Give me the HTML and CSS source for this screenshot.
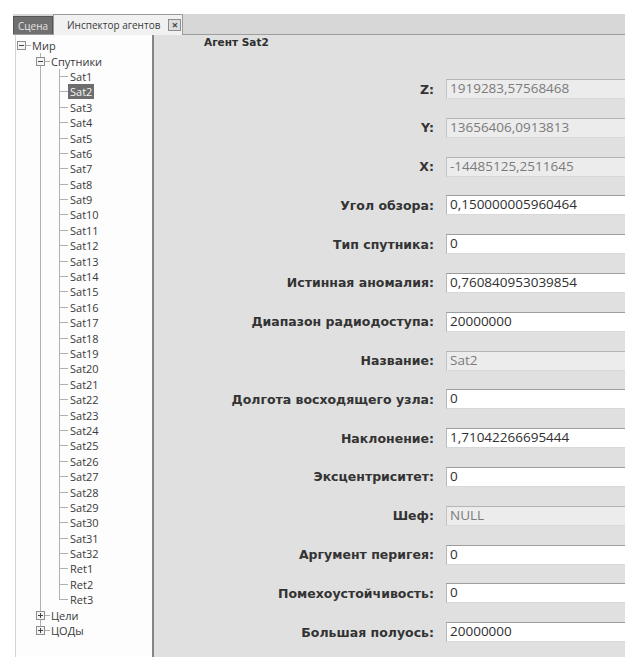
FILE: index.html
```html
<!DOCTYPE html>
<html lang="ru">
<head>
<meta charset="utf-8">
<title>Инспектор агентов</title>
<link rel="stylesheet" href="styles.css">
</head>
<body>
<div class="app">
  <div class="tabs">
    <div class="tab scene">Сцена</div>
    <div class="tab active">Инспектор агентов <span class="close">×</span></div>
    <div class="tab-fill"></div>
  </div>
  <div class="content">
    <div class="tree">
      <div class="row"><span class="cell first box-solo"><i class="box minus"></i></span><span class="label">Мир</span></div>
      <div class="row"><span class="cell first"></span><span class="cell box-mid"><i class="box minus"></i></span><span class="label">Спутники</span></div>
      <div class="row"><span class="cell first"></span><span class="cell pass"></span><span class="cell tee"></span><span class="label">Sat1</span></div>
      <div class="row"><span class="cell first"></span><span class="cell pass"></span><span class="cell tee"></span><span class="label selected">Sat2</span></div>
      <div class="row"><span class="cell first"></span><span class="cell pass"></span><span class="cell tee"></span><span class="label">Sat3</span></div>
      <div class="row"><span class="cell first"></span><span class="cell pass"></span><span class="cell tee"></span><span class="label">Sat4</span></div>
      <div class="row"><span class="cell first"></span><span class="cell pass"></span><span class="cell tee"></span><span class="label">Sat5</span></div>
      <div class="row"><span class="cell first"></span><span class="cell pass"></span><span class="cell tee"></span><span class="label">Sat6</span></div>
      <div class="row"><span class="cell first"></span><span class="cell pass"></span><span class="cell tee"></span><span class="label">Sat7</span></div>
      <div class="row"><span class="cell first"></span><span class="cell pass"></span><span class="cell tee"></span><span class="label">Sat8</span></div>
      <div class="row"><span class="cell first"></span><span class="cell pass"></span><span class="cell tee"></span><span class="label">Sat9</span></div>
      <div class="row"><span class="cell first"></span><span class="cell pass"></span><span class="cell tee"></span><span class="label">Sat10</span></div>
      <div class="row"><span class="cell first"></span><span class="cell pass"></span><span class="cell tee"></span><span class="label">Sat11</span></div>
      <div class="row"><span class="cell first"></span><span class="cell pass"></span><span class="cell tee"></span><span class="label">Sat12</span></div>
      <div class="row"><span class="cell first"></span><span class="cell pass"></span><span class="cell tee"></span><span class="label">Sat13</span></div>
      <div class="row"><span class="cell first"></span><span class="cell pass"></span><span class="cell tee"></span><span class="label">Sat14</span></div>
      <div class="row"><span class="cell first"></span><span class="cell pass"></span><span class="cell tee"></span><span class="label">Sat15</span></div>
      <div class="row"><span class="cell first"></span><span class="cell pass"></span><span class="cell tee"></span><span class="label">Sat16</span></div>
      <div class="row"><span class="cell first"></span><span class="cell pass"></span><span class="cell tee"></span><span class="label">Sat17</span></div>
      <div class="row"><span class="cell first"></span><span class="cell pass"></span><span class="cell tee"></span><span class="label">Sat18</span></div>
      <div class="row"><span class="cell first"></span><span class="cell pass"></span><span class="cell tee"></span><span class="label">Sat19</span></div>
      <div class="row"><span class="cell first"></span><span class="cell pass"></span><span class="cell tee"></span><span class="label">Sat20</span></div>
      <div class="row"><span class="cell first"></span><span class="cell pass"></span><span class="cell tee"></span><span class="label">Sat21</span></div>
      <div class="row"><span class="cell first"></span><span class="cell pass"></span><span class="cell tee"></span><span class="label">Sat22</span></div>
      <div class="row"><span class="cell first"></span><span class="cell pass"></span><span class="cell tee"></span><span class="label">Sat23</span></div>
      <div class="row"><span class="cell first"></span><span class="cell pass"></span><span class="cell tee"></span><span class="label">Sat24</span></div>
      <div class="row"><span class="cell first"></span><span class="cell pass"></span><span class="cell tee"></span><span class="label">Sat25</span></div>
      <div class="row"><span class="cell first"></span><span class="cell pass"></span><span class="cell tee"></span><span class="label">Sat26</span></div>
      <div class="row"><span class="cell first"></span><span class="cell pass"></span><span class="cell tee"></span><span class="label">Sat27</span></div>
      <div class="row"><span class="cell first"></span><span class="cell pass"></span><span class="cell tee"></span><span class="label">Sat28</span></div>
      <div class="row"><span class="cell first"></span><span class="cell pass"></span><span class="cell tee"></span><span class="label">Sat29</span></div>
      <div class="row"><span class="cell first"></span><span class="cell pass"></span><span class="cell tee"></span><span class="label">Sat30</span></div>
      <div class="row"><span class="cell first"></span><span class="cell pass"></span><span class="cell tee"></span><span class="label">Sat31</span></div>
      <div class="row"><span class="cell first"></span><span class="cell pass"></span><span class="cell tee"></span><span class="label">Sat32</span></div>
      <div class="row"><span class="cell first"></span><span class="cell pass"></span><span class="cell tee"></span><span class="label">Ret1</span></div>
      <div class="row"><span class="cell first"></span><span class="cell pass"></span><span class="cell tee"></span><span class="label">Ret2</span></div>
      <div class="row"><span class="cell first"></span><span class="cell pass"></span><span class="cell end"></span><span class="label">Ret3</span></div>
      <div class="row"><span class="cell first"></span><span class="cell box-mid"><i class="box plus"></i></span><span class="label">Цели</span></div>
      <div class="row"><span class="cell first"></span><span class="cell box-last"><i class="box plus"></i></span><span class="label">ЦОДы</span></div>
    </div>

    <div class="inspector">
      <div class="title">Агент Sat2</div>
      <div class="form">
        <label class="name">Z:</label><div class="field readonly">1919283,57568468</div>
        <label class="name">Y:</label><div class="field readonly">13656406,0913813</div>
        <label class="name">X:</label><div class="field readonly">-14485125,2511645</div>
        <label class="name">Угол обзора:</label><div class="field">0,150000005960464</div>
        <label class="name">Тип спутника:</label><div class="field">0</div>
        <label class="name">Истинная аномалия:</label><div class="field">0,760840953039854</div>
        <label class="name">Диапазон радиодоступа:</label><div class="field">20000000</div>
        <label class="name">Название:</label><div class="field readonly">Sat2</div>
        <label class="name">Долгота восходящего узла:</label><div class="field">0</div>
        <label class="name">Наклонение:</label><div class="field">1,71042266695444</div>
        <label class="name">Эксцентриситет:</label><div class="field">0</div>
        <label class="name">Шеф:</label><div class="field readonly">NULL</div>
        <label class="name">Аргумент перигея:</label><div class="field">0</div>
        <label class="name">Помехоустойчивость:</label><div class="field">0</div>
        <label class="name">Большая полуось:</label><div class="field">20000000</div>
      </div>
    </div>
  </div>
</div>
</body>
</html>
```

FILE: styles.css
```css
html, body {
  margin: 0;
  padding: 0;
  background: #fff;
}

.app {
  width: 625px;
  height: 657px;
  overflow: hidden;
  padding: 14px 0 0 13px;
  box-sizing: border-box;
  display: flex;
  flex-direction: column;
  font-family: "Open Sans", "DejaVu Sans", sans-serif;
  color: #333;
}

/* ---- tab strip ---- */
.tabs {
  display: flex;
  align-items: flex-end;
  height: 20px;
  background: #d7d7d7;
  border-bottom: 1px solid #9c9c9c;
  flex: none;
}

.tab {
  font-size: 10px;
  line-height: 16px;
  white-space: nowrap;
  display: flex;
  align-items: center;
  box-sizing: border-box;
}

.tab.scene {
  width: 40px;
  height: 18px;
  justify-content: center;
  background: #6f6f6f;
  color: #e4e4e4;
  border: 1px solid #555;
  border-bottom: none;
}

.tab.active {
  width: 130px;
  height: 21px;
  margin-bottom: -1px;
  padding-left: 13px;
  background: #f1f1f1;
  border: 1px solid #9a9a9a;
  border-bottom: none;
  color: #3a3a3a;
}

.close {
  margin-left: 8px;
  width: 13px;
  height: 12px;
  box-sizing: border-box;
  border: 1px solid #8c8c8c;
  background: #dcdcdc;
  font-size: 11px;
  line-height: 9px;
  text-align: center;
  font-weight: bold;
  color: #444;
}

.tab-fill {
  flex: 1;
}

/* ---- main area ---- */
.content {
  flex: 1;
  display: flex;
  min-height: 0;
}

/* ---- object tree ---- */
.tree {
  width: 136px;
  margin-left: 2px;
  padding-top: 3px;
  background: #fdfdfd;
  border-left: 1px solid #d3d3d3;
  border-right: 2px solid #858585;
  flex: none;
  font-size: 11px;
  color: #3a3a3a;
}

.row {
  display: flex;
  height: 15.4px;
  align-items: stretch;
}

.cell {
  width: 19px;
  flex: none;
  display: flex;
  align-items: center;
  background-repeat: no-repeat;
}

.cell.first {
  width: 15px;
}

/* branch connectors drawn as 1px gradient strokes */
.cell.pass {
  background-image: linear-gradient(#b0b0b0, #b0b0b0);
  background-position: 9px 0;
  background-size: 1px 100%;
}

.cell.tee {
  background-image: linear-gradient(#b0b0b0, #b0b0b0), linear-gradient(#b0b0b0, #b0b0b0);
  background-position: 9px 0, 9px 50%;
  background-size: 1px 100%, 9px 1px;
}

.cell.end {
  background-image: linear-gradient(#b0b0b0, #b0b0b0), linear-gradient(#b0b0b0, #b0b0b0);
  background-position: 9px 0, 9px 50%;
  background-size: 1px 50%, 9px 1px;
}

.cell.box-solo {
  background-image: linear-gradient(#b0b0b0, #b0b0b0);
  background-position: 9px 50%;
  background-size: 6px 1px;
}

.cell.box-mid {
  background-image: linear-gradient(#b0b0b0, #b0b0b0), linear-gradient(#b0b0b0, #b0b0b0);
  background-position: 9px 0, 13px 50%;
  background-size: 1px 100%, 6px 1px;
}

.cell.box-last {
  background-image: linear-gradient(#b0b0b0, #b0b0b0), linear-gradient(#b0b0b0, #b0b0b0);
  background-position: 9px 0, 13px 50%;
  background-size: 1px 50%, 6px 1px;
}

.box {
  width: 9px;
  height: 9px;
  margin-left: 5px;
  box-sizing: border-box;
  border: 1px solid #8e8e8e;
  background-color: #f4f4f4;
  background-repeat: no-repeat;
}

.cell.first .box {
  margin-left: 1px;
}

.box.minus {
  background-image: linear-gradient(#444, #444);
  background-position: 1px 3px;
  background-size: 5px 1px;
}

.box.plus {
  background-image: linear-gradient(#444, #444), linear-gradient(#444, #444);
  background-position: 1px 3px, 3px 1px;
  background-size: 5px 1px, 1px 5px;
}

.label {
  line-height: 15px;
  padding: 0 1px;
  white-space: nowrap;
  align-self: center;
}

.label.selected {
  background: #6d6d6d;
  color: #f4f4f4;
  padding: 0 2px;
  margin-left: -1px;
}

/* ---- property inspector ---- */
.inspector {
  flex: 1;
  background: #e0e0e0;
  padding-top: 0;
  overflow: hidden;
}

.title {
  font-family: "DejaVu Sans", sans-serif;
  font-weight: bold;
  font-size: 10.5px;
  line-height: 14px;
  padding-left: 50px;
  color: #2e2e2e;
}

.form {
  margin-top: 30px;
  display: grid;
  grid-template-columns: 280px 320px;
  grid-auto-rows: 20px;
  column-gap: 12px;
  row-gap: 18.8px;
  align-items: center;
}

.name {
  font-family: "DejaVu Sans", sans-serif;
  font-weight: bold;
  font-size: 12.5px;
  text-align: right;
  color: #333;
  white-space: nowrap;
}

.field {
  height: 20px;
  box-sizing: border-box;
  padding-left: 3px;
  font-size: 13.5px;
  line-height: 17px;
  background: #fff;
  color: #2f2f2f;
  border-top: 1px solid #9d9d9d;
  border-left: 1px solid #b8b8b8;
  border-bottom: 1px solid #d8d8d8;
  white-space: nowrap;
}

.field.readonly {
  background: #ececec;
  color: #7b7b7b;
  border-top-color: #b4b4b4;
  border-left-color: #c4c4c4;
}
```
